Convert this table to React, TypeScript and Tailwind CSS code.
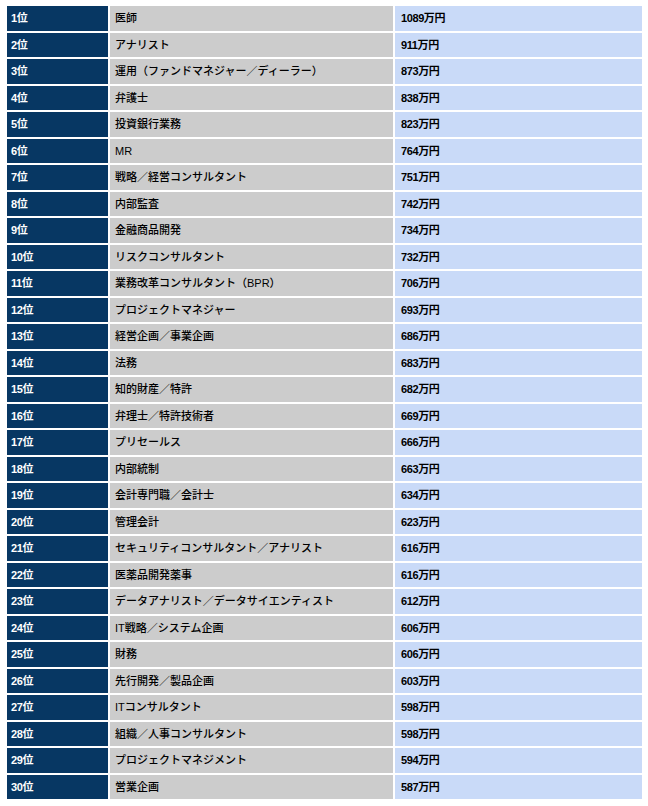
const rows: [string, string][] = [
  ["医師", "1089万円"],
  ["アナリスト", "911万円"],
  ["運用（ファンドマネジャー／ディーラー）", "873万円"],
  ["弁護士", "838万円"],
  ["投資銀行業務", "823万円"],
  ["MR", "764万円"],
  ["戦略／経営コンサルタント", "751万円"],
  ["内部監査", "742万円"],
  ["金融商品開発", "734万円"],
  ["リスクコンサルタント", "732万円"],
  ["業務改革コンサルタント（BPR）", "706万円"],
  ["プロジェクトマネジャー", "693万円"],
  ["経営企画／事業企画", "686万円"],
  ["法務", "683万円"],
  ["知的財産／特許", "682万円"],
  ["弁理士／特許技術者", "669万円"],
  ["プリセールス", "666万円"],
  ["内部統制", "663万円"],
  ["会計専門職／会計士", "634万円"],
  ["管理会計", "623万円"],
  ["セキュリティコンサルタント／アナリスト", "616万円"],
  ["医薬品開発薬事", "616万円"],
  ["データアナリスト／データサイエンティスト", "612万円"],
  ["IT戦略／システム企画", "606万円"],
  ["財務", "606万円"],
  ["先行開発／製品企画", "603万円"],
  ["ITコンサルタント", "598万円"],
  ["組織／人事コンサルタント", "598万円"],
  ["プロジェクトマネジメント", "594万円"],
  ["営業企画", "587万円"],
];

export default function App() {
  return (
    <div className="w-[648px] h-[806px] bg-white pt-[6px] pl-[7px] font-['Liberation_Sans','Noto_Sans_CJK_JP',sans-serif] text-[11px]">
      <div className="grid grid-cols-[101px_283px_247px] auto-rows-[24.53px] gap-[2px]">
        {rows.map(([job, pay], i) => (
          <div key={i} className="contents">
            <div className="flex items-center bg-[#073763] pl-[4px] font-bold text-white tracking-[-0.4px]">
              {i + 1}位
            </div>
            <div className="flex items-center bg-[#cccccc] pl-[5px] font-medium text-black">
              {job}
            </div>
            <div className="flex items-center bg-[#c9daf8] pl-[6px] font-bold text-black tracking-[-0.4px]">
              {pay}
            </div>
          </div>
        ))}
      </div>
    </div>
  );
}
